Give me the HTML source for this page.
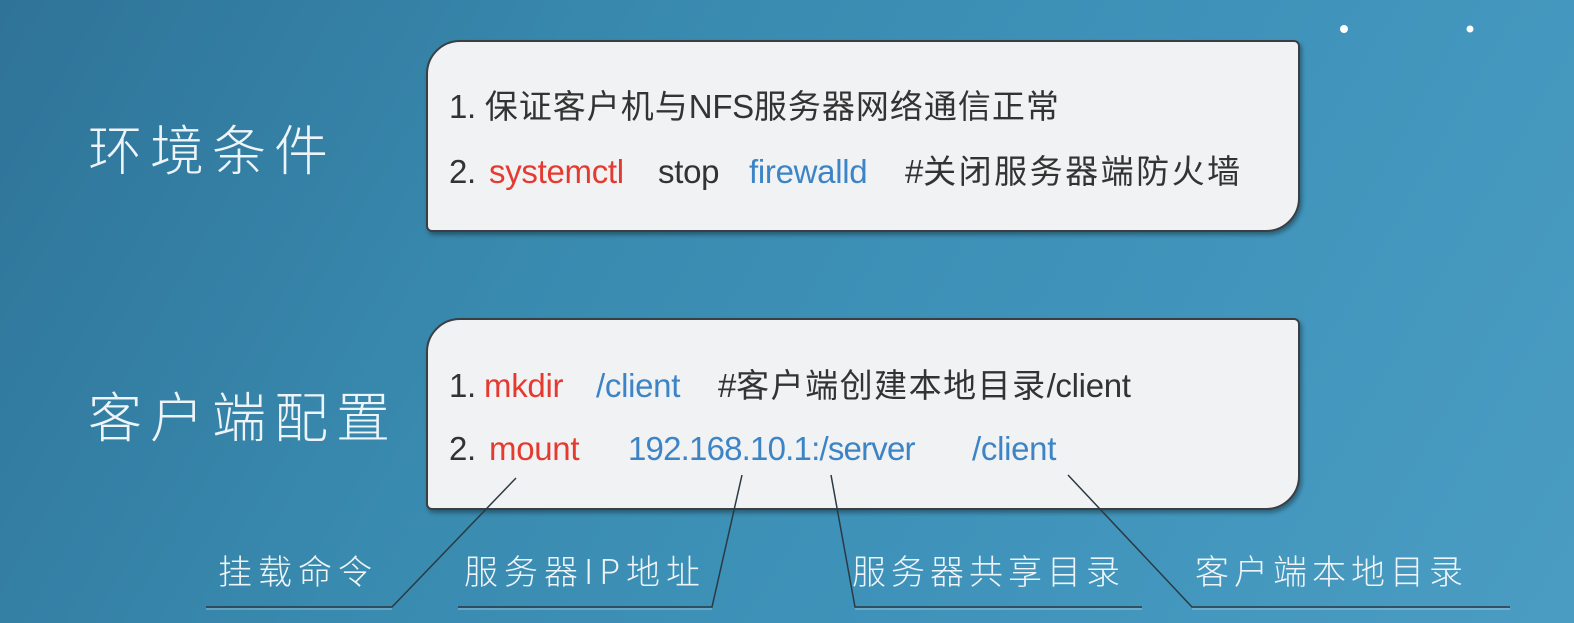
<!DOCTYPE html>
<html><head><meta charset="utf-8"><style>
body{margin:0;width:1574px;height:623px;overflow:hidden;background:linear-gradient(120deg,#2f7398 0%,#398aaf 35%,#3f93ba 65%,#4a9cc2 100%);font-family:"Liberation Sans","Noto Sans CJK SC",sans-serif;position:relative}
.box{position:absolute;left:426px;width:870px;height:188px;background:#f1f2f3;border:2px solid #3a3f44;border-radius:34px 6px 34px 6px;box-shadow:2px 3px 4px rgba(0,0,0,.35)}
.t{position:absolute;font-size:33px;line-height:40px;color:#333;white-space:nowrap;letter-spacing:-0.3px}
.r{color:#e53a30}.b{color:#3c84c6}
.c{letter-spacing:1px}
.h{position:absolute;font-size:54px;color:#eef4f8;letter-spacing:8px;font-family:"Noto Sans CJK SC",sans-serif;font-weight:300;line-height:64px}
.l{position:absolute;font-size:34px;color:#eef4f8;letter-spacing:6px;font-family:"Noto Sans CJK SC",sans-serif;font-weight:300;line-height:44px}
</style></head><body>
<div class="h" style="left:88px;top:115px">环境条件</div>
<div class="h" style="left:88px;top:382px">客户端配置</div>
<div class="box" style="top:40px"></div>
<div class="box" style="top:318px"></div>
<div class="t" style="left:449px;top:87px">1. <span class="c">保证客户机与</span>NFS<span class="c">服务器网络通信正常</span></div>
<div class="t" style="left:449px;top:152px">2.</div>
<div class="t r" style="left:489px;top:152px">systemctl</div>
<div class="t" style="left:658px;top:152px">stop</div>
<div class="t b" style="left:749px;top:152px">firewalld</div>
<div class="t" style="left:905px;top:152px">#<span class="c" style="letter-spacing:2.5px">关闭服务器端防火墙</span></div>
<div class="t" style="left:449px;top:366px">1.</div>
<div class="t r" style="left:484px;top:366px">mkdir</div>
<div class="t b" style="left:596px;top:366px">/client</div>
<div class="t" style="left:718px;top:366px">#<span class="c" style="letter-spacing:1.5px">客户端创建本地目录</span>/client</div>
<div class="t" style="left:449px;top:429px">2.</div>
<div class="t r" style="left:489px;top:429px">mount</div>
<div class="t b" style="left:628px;top:429px;letter-spacing:-0.8px">192.168.10.1:/server</div>
<div class="t b" style="left:972px;top:429px">/client</div>
<svg style="position:absolute;left:0;top:0" width="1574" height="623">
<g stroke="#2a3a44" stroke-width="1.5" fill="none">
<polyline points="516,478 392,607 206,607"/>
<polyline points="742,475 712,607 458,607"/>
<polyline points="831,475 855,607 1142,607"/>
<polyline points="1068,475 1192,607 1510,607"/>
</g>
<g stroke="#cfe3ee" stroke-width="1" opacity=".6"><line x1="206" y1="609" x2="392" y2="609"/><line x1="458" y1="609" x2="712" y2="609"/><line x1="855" y1="609" x2="1142" y2="609"/><line x1="1192" y1="609" x2="1510" y2="609"/></g>
<circle cx="1344" cy="29" r="4" fill="#fff"/><circle cx="1470" cy="29" r="3.5" fill="#fff"/>
</svg>
<div class="l" style="left:218px;top:548px">挂载命令</div>
<div class="l" style="left:464px;top:548px">服务器IP地址</div>
<div class="l" style="left:852px;top:548px;letter-spacing:5px">服务器共享目录</div>
<div class="l" style="left:1195px;top:548px;letter-spacing:5px">客户端本地目录</div>
</body></html>
